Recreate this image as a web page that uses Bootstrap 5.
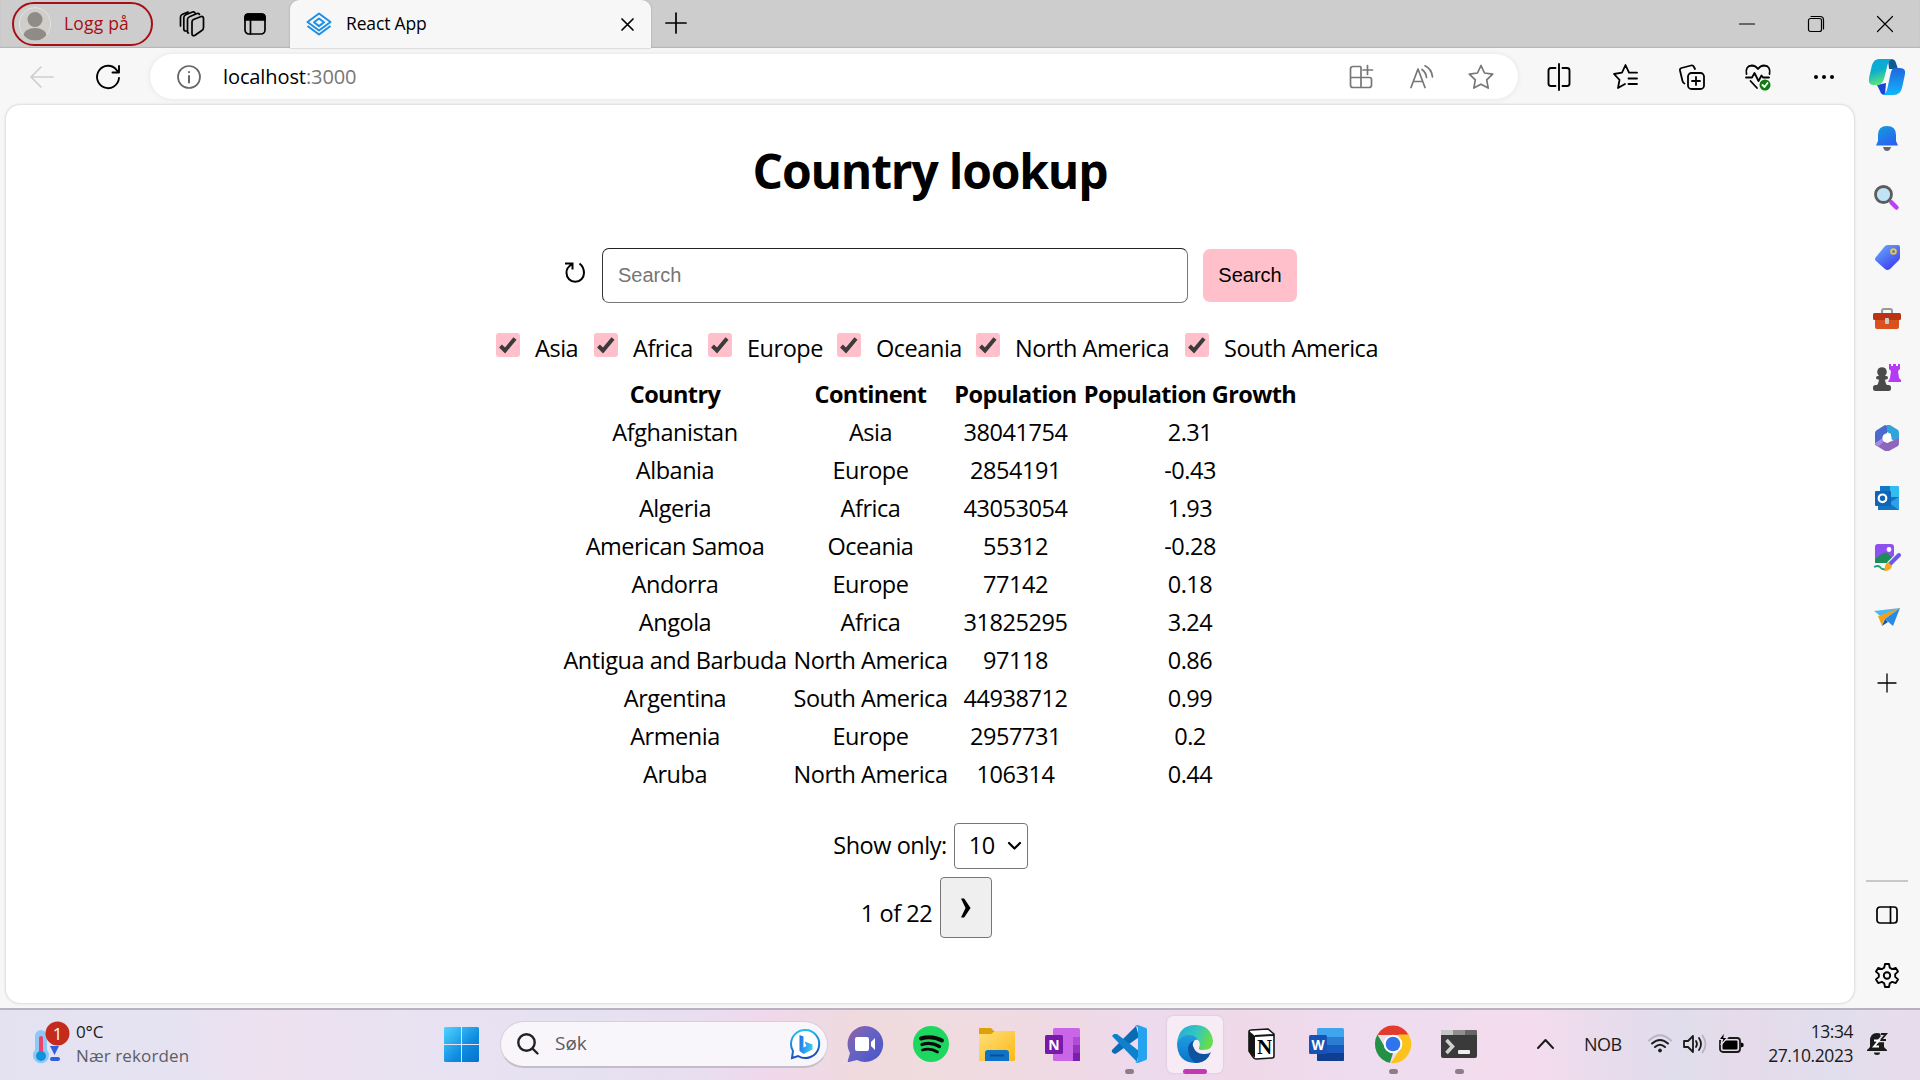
<!DOCTYPE html>
<html lang="no">
<head>
<meta charset="utf-8">
<title>React App</title>
<link href="https://cdn.jsdelivr.net/npm/bootstrap@5.3.0/dist/css/bootstrap.min.css" rel="stylesheet">
<script src="https://cdn.jsdelivr.net/npm/bootstrap@5.3.0/dist/js/bootstrap.bundle.min.js"></script>
<style>
body{width:1920px;height:1080px;overflow:hidden;background:#f7f7f7;color:#000;font-family:"Open Sans","Noto Sans",sans-serif;line-height:1}
svg{display:block;flex:none;overflow:visible}
.ln{fill:none;stroke:currentColor;stroke-width:1.7;stroke-linecap:round;stroke-linejoin:round}
.cell{display:flex;align-items:center;justify-content:center;flex:none}
/* tab strip */
.tabstrip{height:48px;background:#cdcdcd;box-shadow:inset 0 -1px 1px #b5b5b5;padding-left:12px}
.login{width:141px;height:44px;margin-top:2px;border:2px solid #a80f14;border-radius:22px;color:#a80f14;font-size:17.5px;letter-spacing:.2px;padding-left:5px;gap:13px}
.tab{width:361px;height:48px;background:#f7f7f7;border-radius:9px 9px 0 0;font-size:17.5px;letter-spacing:-.15px;padding:0 16px 0 16px;box-shadow:0 0 2px #999}
.w66{width:66px}.w60{width:60px}.w70{width:70px}
.thin{stroke-width:1.2}
/* toolbar */
.toolbar{height:57px}
.omnibox{width:1368px;height:45px;background:#fff;border-radius:23px;box-shadow:0 0 5px #e3e3e3;font-size:20px;letter-spacing:-.1px;padding-left:27px;padding-right:7px}
/* page */
.page{width:1848px;height:898px;margin-left:6px;background:#fff;border-radius:14px;box-shadow:0 0 3px #bdbdbd;font-size:23.5px;letter-spacing:-.46px}
.page h1{font-size:48px;font-weight:700;line-height:60px;margin:36px 0 47px;letter-spacing:-1.2px}
.reload{width:37px;padding-bottom:7px}
.field{width:586px;height:55px;border:1px solid #777;border-top-color:#222;border-left-color:#333;border-radius:7px;padding:0 15px;font:20px "Liberation Sans",sans-serif}
.field::placeholder{color:#757575}
.go{width:94px;height:53px;border:0;border-radius:7px;background:#ffc0cb;margin-left:15px;font:20px "Liberation Sans",sans-serif;padding:0}
.filters{margin-top:27px;padding-left:490px;height:36px}
.filters label{display:flex;flex:none}
.tick{width:24px;height:24px;background:#ffc0cb;border-radius:3px;margin:3px 15px 0 0}
.filters span{line-height:36px;white-space:nowrap}
.lands{width:740px;margin:9px auto 0;table-layout:fixed;border-collapse:collapse;text-align:center}
.lands th,.lands td{height:38px;padding:0;line-height:34px;white-space:nowrap;vertical-align:middle}
.lands th{letter-spacing:-.6px}
.pick{width:74px;height:46px;border:1px solid #767676;border-radius:4px;padding:0 6px 0 14px}
.next{width:52px;height:61px;border:1px solid #767676;border-radius:4px;background:#efefef;padding:0}
/* side bar */
.side{width:66px}
.side .cell{height:60px}
/* task bar */
.taskbar{height:72px;padding-bottom:2px;border-top:2px solid #b7b2be;color:#1b1b1b;background:linear-gradient(90deg,#e4e2f1 0,#e6e2f1 190px,#eee1f0 270px,#e8e2f1 400px,#e6e1f1 600px,#e8def0 700px,#f0d8eb 770px,#efdade 860px,#efdcdf 930px,#efd9e5 1080px,#ecdaee 1150px,#efd9e8 1240px,#eedcf0 1370px,#f4dcee 1530px,#e5dcec 1630px,#e0deec 1680px,#e6dbea 1740px,#e1deed 1830px,#e8dcec 1920px)}
.weather{width:444px;padding-left:32px;font-size:17px;letter-spacing:-.1px}
.tsearch{width:328px;height:47px;border-radius:24px;background:#f9f6fb;border:1px solid #d6cfdd;border-bottom:2px solid #c5bcc9;padding:0 7px 0 16px;font-size:19px;color:#5b5b60}
.app{width:66px;height:70px;position:relative}
.app.on::before{content:"";position:absolute;left:5px;top:7px;width:56px;height:57px;border-radius:6px;background:#f7ebf6;box-shadow:0 0 2px #c9b8c9}
.app svg{position:relative}
.run::after,.on::after{content:"";position:absolute;top:60px;left:28.5px;width:9px;height:5px;border-radius:3px;background:#8b7e8b}
.on::after{left:21px;width:24px;background:#c239b3}
</style>
</head>
<body>
<header class="tabstrip d-flex">
  <div class="login d-flex align-items-center">
    <svg width="32" height="34" viewBox="0 0 32 34"><defs><clipPath id="av"><ellipse cx="16" cy="17" rx="15.5" ry="16.5"/></clipPath></defs><ellipse cx="16" cy="17" rx="15.5" ry="16.5" fill="#d0cecb" stroke="#e5e3e0"/><g fill="#8f8b86" clip-path="url(#av)"><ellipse cx="16" cy="12.500" rx="7.500" ry="7.500"/><ellipse cx="16" cy="29" rx="11.500" ry="8"/></g></svg>
    <span>Logg på</span>
  </div>
  <div class="cell" style="width:78px"><svg class="ln" width="26" height="26" viewBox="0 0 26 26"><path d="M14.500 8.500l7-2.800q3-1 3 2v9q0 2-2 3l-6.500 4.500q-3 1.500-3-1.500V11q0-1.800 1.500-2.500zM8.500 21V8.500q0-2 2-2.800L18 2.500q2-.6 2.500 1M9.500 22q-1 0-1-2M4.800 18.500V6.500q0-2 2-2.800L13.500 1q2-.6 2.500 1M7 20q-2.200 0-2.200-2M1.500 15V6q0-2 2-2.800L9 1"/></svg></div>
  <div class="cell" style="width:48px"><svg class="ln" width="24" height="24" viewBox="0 0 24 24"><rect x="2" y="2" width="20" height="20" rx="4"/><path d="M2 5q0-3 3-3h14q3 0 3 3v3H2z" fill="currentColor"/><path d="M7.500 8v14"/></svg></div>
  <div class="tab d-flex align-items-center" style="margin-left:11px">
    <svg width="26" height="24" viewBox="0 0 26 24" fill="none" stroke="#1e8fe6" stroke-width="2" stroke-linejoin="round"><path d="M13 1.500L24.500 10 13 18.500 1.500 10z"/><path d="M13 6.500l5 3.800-5 3.800-5-3.800zM1.500 14L13 22.500 24.500 14"/></svg>
    <span class="flex-grow-1" style="padding-left:14px">React App</span>
    <svg class="ln" width="15" height="15" viewBox="0 0 15 15"><path d="M2 2l11 11M13 2L2 13"/></svg>
  </div>
  <div class="cell" style="width:50px;height:46px"><svg class="ln" width="22" height="22" viewBox="0 0 22 22"><path d="M11 1v20M1 11h20"/></svg></div>
  <div class="ms-auto d-flex" style="height:47px">
    <div class="cell w70"><svg class="ln thin" width="16" height="16" viewBox="0 0 16 16"><path d="M.5 8h15"/></svg></div>
    <div class="cell" style="width:68px"><svg class="ln thin" width="16" height="16" viewBox="0 0 16 16"><rect x=".5" y="2.500" width="13" height="13" rx="2"/><path d="M3 .5h9q3.500 0 3.500 3.500v9"/></svg></div>
    <div class="cell w70"><svg class="ln thin" width="16" height="16" viewBox="0 0 16 16"><path d="M.5.5l15 15M15.500.5l-15 15"/></svg></div>
  </div>
</header>

<div class="toolbar d-flex align-items-center">
  <div class="cell" style="width:84px"><svg class="ln" width="24" height="22" viewBox="0 0 24 22" style="color:#cfcfcf"><path d="M23 11H1M11 1L1 11l10 10"/></svg></div>
  <div class="cell" style="width:48px;margin-right:18px"><svg class="ln" width="24" height="24" viewBox="0 0 24 24" style="stroke-width:1.9"><path d="M23 13A11 11.200 0 1 1 20.500 4.800L22.500 7M23 1v6.500h-6.500"/></svg></div>
  <div class="omnibox d-flex align-items-center">
    <svg class="ln" width="24" height="24" viewBox="0 0 24 24" style="color:#666"><circle cx="12" cy="12" r="11"/><path d="M12 11v6.500M12 7v.2" stroke-width="2"/></svg>
    <span class="flex-grow-1" style="padding-left:22px">localhost<span style="color:#777">:3000</span></span>
    <div class="d-flex" style="color:#777">
      <div class="cell w60"><svg class="ln" width="24" height="24" viewBox="0 0 24 24"><path d="M11.500 1.500H4Q1.500 1.500 1.500 4v16q0 2.500 2.500 2.500h16q2.500 0 2.500-2.500v-5.500q0-2-2-2h-19M12 2v20.500M18.500.5v9M14 5h9.500"/></svg></div>
      <div class="cell w60"><svg class="ln" width="25" height="24" viewBox="0 0 25 24"><path d="M2 22.500L9 4l7 18.500M4.500 16.500h9M13 4.500q4 3 4.500 8M16 .8q6.500 3 7.500 11"/></svg></div>
      <div class="cell w60"><svg class="ln" width="26" height="26" viewBox="0 0 26 26"><path d="M13 1.500l3.500 7.500 8.200 1.200-6 5.700 1.500 8.200L13 20.200l-7.200 3.900 1.500-8.200-6-5.700L9.500 9z"/></svg></div>
    </div>
  </div>
  <div class="d-flex" style="margin-left:8px">
    <div class="cell w66"><svg class="ln" width="24" height="26" viewBox="0 0 24 26" style="stroke-width:1.9"><path d="M12 0v26M8.500 4H4Q1.500 4 1.500 6.500v13Q1.500 22 4 22h4.500M15.500 4H20q2.500 0 2.500 2.500v13q0 2.500-2.500 2.500h-4.500"/></svg></div>
    <div class="cell" style="width:67px"><svg class="ln" width="25" height="25" viewBox="0 0 25 25" style="stroke-width:1.8"><path d="M12 20l-7 4 1.500-8.200L1 10l8-1.300L12.500 1 16 8.700h8M15.500 14.500H24M15.500 20H24"/></svg></div>
    <div class="cell w66"><svg class="ln" width="26" height="26" viewBox="0 0 26 26" style="stroke-width:1.8"><rect x="9" y="9" width="16" height="16" rx="3.500"/><path d="M17 13v8M13 17h8M5.500 19.500Q4 19 3.500 17L1 6.500Q.6 4.500 2.500 4L12 1.500q2-.5 2.700 1L16 5"/></svg></div>
    <div class="cell w66"><svg class="ln" width="26" height="26" viewBox="0 0 26 26" style="stroke-width:1.8"><path d="M1.500 10Q0 2 7 1.500q3.500 0 6 3.500 2.500-3.500 6-3.500 7 .5 5.500 8.500M1 13.500h6l2.500-4.500 4 8 3-5.500 1.500 2h6M5.500 17l6.500 7"/><circle cx="20" cy="21" r="5.500" fill="#107c10" stroke="none"/><path d="M17.500 21l2 2 3-4" stroke="#fff"/></svg></div>
    <div class="cell w66"><svg width="22" height="6" viewBox="0 0 22 6"><circle cx="3" cy="3" r="2"/><circle cx="11" cy="3" r="2"/><circle cx="19" cy="3" r="2"/></svg></div>
    <div class="cell w60"><svg width="36" height="36" viewBox="0 0 36 36"><defs><linearGradient id="ca" x2=".3" y2="1"><stop offset="0" stop-color="#08a5df"/><stop offset=".5" stop-color="#0bb0cb"/><stop offset="1" stop-color="#5ee27a"/></linearGradient><linearGradient id="cb" x2="0" y2="1"><stop stop-color="#1f67dc"/><stop offset="1" stop-color="#12b5ff"/></linearGradient></defs><path d="M19 0h3q4 0 5 4l2 6h-9z" fill="#0e5a91"/><path d="M8 26l9-2-1 12q-4 0-5-4z" fill="#1a45d6"/><path d="M10 0h14q-4.500.5-6 8l-3 12q-2 6-7 6H4Q-1 26 0 19L3 6Q5 0 10 0z" fill="url(#ca)"/><path d="M26 9h5q6 0 5 6l-3 14q-2 7-8 7H13q4 0 5.500-7l3-14q1-6 4.500-6z" fill="url(#cb)"/></svg></div>
  </div>
</div>

<div class="d-flex" style="height:903px">
  <main class="page">
    <h1 class="text-center">Country lookup</h1>
    <div class="d-flex align-items-center justify-content-center" style="padding-left:2px">
      <div class="reload"><svg width="21" height="21" viewBox="0 0 21 21" fill="none" stroke="#000" stroke-width="2"><path d="M0 1.500h7.500v6M7 2Q1 6 1.500 11a8.700 8.700 0 0 0 17.500 0Q19 5 14.500 1.500"/></svg></div>
      <input class="field" placeholder="Search"><button class="go">Search</button>
    </div>
    <div class="filters d-flex" id="filters"></div>
    <table class="lands"><colgroup><col style="width:230px"><col style="width:161px"><col style="width:129px"><col style="width:220px"></colgroup>
      <thead><tr><th>Country</th><th>Continent</th><th>Population</th><th>Population Growth</th></tr></thead>
      <tbody id="rows"></tbody></table>
    <div class="d-flex justify-content-center align-items-center" style="margin-top:30px;padding-left:1px"><span style="margin-right:7px">Show only:</span><div class="pick d-flex align-items-center justify-content-between"><span>10</span><svg class="ln" width="13" height="8" viewBox="0 0 13 8" style="stroke-width:2.2"><path d="M1 1l5.500 5.500L12 1"/></svg></div></div>
    <div class="d-flex justify-content-center" style="margin-top:8px;padding-right:7px"><span style="padding-top:25px;margin-right:8px">1 of 22</span><button class="next cell"><svg width="10" height="20" viewBox="0 0 11 21"><path d="M0 0h3.500L10.500 10.500 3.500 21H0L5 10.500z"/></svg></button></div>
  </main>
  <aside class="side d-flex flex-column align-items-center">
    <div class="cell" style="height:66px"><svg width="22" height="25" viewBox="0 0 22 25"><defs><linearGradient id="be" x2=".6" y2="1"><stop stop-color="#10a0dc"/><stop offset="1" stop-color="#2b62f0"/></linearGradient></defs><path d="M7 21h8q-1 4-4 4t-4-4z" fill="#666"/><path d="M11 0q9 0 9 9v6l2 4.500H0L2 15V9q0-9 9-9z" fill="url(#be)"/></svg></div>
    <div class="cell" style="height:52px;padding-right:2px"><svg width="25" height="25" viewBox="0 0 25 25"><path d="M17.500 17.500l5 5" stroke="#c23cf5" stroke-width="4.500" stroke-linecap="round"/><circle cx="9.500" cy="9.500" r="8" fill="#bfe4f8" stroke="#5c5c5c" stroke-width="2.800"/></svg></div>
    <div class="cell" style="height:69px"><svg width="25" height="25" viewBox="0 0 25 25"><defs><linearGradient id="tg" x2=".7" y2="1"><stop stop-color="#69b4ff"/><stop offset="1" stop-color="#3e3cf0"/></linearGradient></defs><path d="M13 0h10q2 0 2 2v10q0 2-1 3l-9 9q-3 2-5 0l-9-8q-2-2 0-4L10 1q1-1 3-1z" fill="url(#tg)"/><circle cx="18.500" cy="6.500" r="2.400" fill="none" stroke="#ffc81e" stroke-width="1.800"/></svg></div>
    <div class="cell" style="height:54px"><svg width="28" height="22" viewBox="0 0 28 22"><path d="M9 6V3q0-2 2-2h6q2 0 2 2v3" fill="none" stroke="#999" stroke-width="2"/><path d="M2 10h24v9q0 2-2 2H4q-2 0-2-2z" fill="#d9511c"/><rect y="5" width="28" height="7" rx="1.500" fill="#b83412"/><rect x="12" y="10" width="4" height="6" rx="1" fill="#ccc"/></svg></div>
    <div class="cell" style="height:63px"><svg width="28" height="27" viewBox="0 0 28 27"><path d="M16 0h2v2h2V0h3v2h2V0h2v5l-2 2 1 7 2 2v2H15l2-4 1-7-2-2z" fill="#b639f5"/><g fill="#4a4a4a"><circle cx="9" cy="8" r="4.800"/><rect x="3" y="12" width="12" height="3.500" rx="1.700"/><path d="M6 14h6q0 6 3 8H3q3-2 3-8z"/><rect y="21" width="18" height="6" rx="2.500"/></g></svg></div>
    <div class="cell" style="height:57px"><svg width="24" height="26" viewBox="0 0 24 26"><path d="M12 0h3l8 5q1 1 1 3v10l-8-4V9l-8-4z" fill="#2fa4dd"/><path d="M0 18l9-2 3 2 12-5v5q0 2-1 3l-9 5h-4l-8-5q-2-1-2-3z" fill="#8e67bd"/><path d="M0 18V8q0-2 2-3l8-5q2 0 2 2v6l-4 3v6l-5 4q-3 0-3-3z" fill="#4a6bcd"/><path d="M0 18l8-5v4l-4 4q-4 0-4-3z" fill="#aa8be2"/><circle cx="12" cy="13" r="4.600" fill="#fff"/></svg></div>
    <div class="cell" style="height:64px"><svg width="24" height="24" viewBox="0 0 24 24"><rect x="6" width="18" height="12" rx="1" fill="#32bdf2"/><path d="M5 0h10v6H5z" fill="#1278c8"/><path d="M3 11h21v13H3z" fill="#1474c4"/><path d="M24 11v13L14 17z" fill="#2fa0e8"/><rect y="5" width="16" height="15" rx="1" fill="#0f65b8"/><circle cx="7.500" cy="12.300" r="3.800" fill="none" stroke="#fff" stroke-width="2.200"/></svg></div>
    <div class="cell" style="height:54px"><svg width="28" height="27" viewBox="0 0 28 27"><rect x="2" width="19" height="19" rx="3" fill="#8e50ee"/><circle cx="16" cy="5.500" r="2.400" fill="#fff"/><path d="M2 15l8-6q2-1 4 0l7 6v2q0 2-2 2H2z" fill="#1c8c5a"/><path d="M1 23q4-2 6 0 2 3 5 2" fill="none" stroke="#22a27a" stroke-width="1.800"/><path d="M17 20l9-9" stroke="#f7f7f7" stroke-width="6.500" stroke-linecap="round"/><path d="M17 20l9-9" stroke="#6a57ee" stroke-width="4" stroke-linecap="round"/><path d="M15 18l4 4q-1 5-8 5 1-2 1-5 1-3 3-4z" fill="#f5a91e"/></svg></div>
    <div class="cell" style="height:66px"><svg width="26" height="19" viewBox="0 0 26 19"><path d="M0 3L26 0 9 10z" fill="#49b9f5"/><path d="M4 8L26 0 10 12 8 18z" fill="#f2a11d"/><path d="M26 0L11 11l8 7z" fill="#258be8"/><path d="M8 18l3-7 3 3z" fill="#1256a8"/></svg></div>
    <div class="cell" style="height:66px;padding-right:1px"><svg class="ln" width="18" height="18" viewBox="0 0 18 18" style="stroke-width:1.3"><path d="M9 0v18M0 9h18"/></svg></div>
    <div style="height:2px;width:42px;background:#c8c8c8;margin:164px 0 3px"></div>
    <div class="cell"><svg class="ln" width="22" height="18" viewBox="0 0 22 18"><rect x="1" y="1" width="20" height="16" rx="3"/><path d="M14.500 1v16"/></svg></div>
    <div class="cell"><svg class="ln" width="24" height="25" viewBox="0 0 24 25" style="stroke-width:1.9"><path d="M10 1h4l.8 3.700 2.400 1.400 3.600-1.200 2.200 3.700-2.800 2.500v2.800l2.800 2.500-2.200 3.700-3.600-1.200-2.400 1.400L14 24h-4l-.8-3.700-2.400-1.400-3.600 1.200L1 16.400l2.800-2.500v-2.800L1 8.600l2.200-3.700 3.600 1.200 2.400-1.400z"/><circle cx="12" cy="12.500" r="3.200"/></svg></div>
  </aside>
</div>

<footer class="taskbar d-flex align-items-center">
  <div class="weather d-flex align-items-center">
    <div class="position-relative" style="width:44px;height:44px"><svg width="38" height="44" viewBox="0 0 38 44"><path d="M3 14a6 6 0 0 1 12 0v14a8 8 0 1 1-12 0z" fill="#8cc9f7"/><path d="M9 16v17" stroke="#f0436a" stroke-width="4" stroke-linecap="round"/><circle cx="9" cy="34" r="5" fill="#1292dd"/><path d="M18 24h9l-4.500 9z" fill="#2f5fe0"/><path d="M20 37h6" stroke="#2f5fe0" stroke-width="4" stroke-linecap="round"/><circle cx="25.500" cy="11.500" r="12" fill="#c42b1c"/><text x="25.500" y="17.500" text-anchor="middle" fill="#fff" font-size="17">1</text></svg></div>
    <div style="padding-bottom:2px"><div>0°C</div><div style="margin-top:7px;color:#5e5c66;letter-spacing:.12px">Nær rekorden</div></div>
  </div>
  <div class="cell" style="width:35px"><svg width="35" height="35" viewBox="0 0 35 35"><defs><linearGradient id="wi" gradientUnits="userSpaceOnUse" x1="0" y1="0" x2="35" y2="35"><stop stop-color="#4fd4ff"/><stop offset=".6" stop-color="#0f8be0"/><stop offset="1" stop-color="#0672cd"/></linearGradient></defs><path d="M1 0h16v17H0V1zM18 0h16l1 1v16H18zM0 18h17v17H1l-1-1zM18 18h17v16l-1 1H18z" fill="url(#wi)"/></svg></div>
  <div class="tsearch d-flex align-items-center" style="margin-left:21px">
    <svg class="ln" width="22" height="22" viewBox="0 0 22 22" style="stroke-width:2.400;color:#222"><circle cx="9.500" cy="9.500" r="8.200"/><path d="M15.500 15.500l5 5"/></svg>
    <span class="flex-grow-1" style="padding-left:16px">Søk</span>
    <svg width="30" height="30" viewBox="0 0 30 30"><defs><linearGradient id="bi" x2=".2" y2="1"><stop stop-color="#22c7f5"/><stop offset="1" stop-color="#1a4fc0"/></linearGradient><linearGradient id="bj" x2="1" y2=".3"><stop stop-color="#1f6fe8"/><stop offset="1" stop-color="#35c4f2"/></linearGradient></defs><path d="M15 1a14 14 0 1 1-7 26l-6 2 1-7Q1 19 1 15A14 14 0 0 1 15 1z" fill="#fff" stroke="url(#bi)" stroke-width="2"/><path d="M9.500 6l4 1.500v11l3-1.500-2-4.500 8 3v5L13.500 25l-4-3z" fill="url(#bj)"/></svg>
  </div>
  <div class="d-flex" style="margin-left:4px">
    <div class="app cell"><svg width="36" height="36" viewBox="0 0 36 36"><defs><linearGradient id="ch" x1="0" y1="0" x2=".9" y2=".8"><stop stop-color="#9560a0"/><stop offset=".5" stop-color="#6763c4"/><stop offset="1" stop-color="#5057c8"/></linearGradient></defs><path d="M18 0a18 18 0 1 1-8 34l-8 2q-2 0-1-2l2-7A18 18 0 0 1 18 0z" fill="url(#ch)"/><rect x="8" y="11" width="14" height="14" rx="2" fill="#fff"/><path d="M24 16l4-4v12l-4-4z" fill="#fff"/></svg></div>
    <div class="app cell"><svg width="36" height="36" viewBox="0 0 36 36"><circle cx="18" cy="18" r="18" fill="#1ed760"/><g fill="none" stroke="#0b0b0b" stroke-linecap="round"><path d="M8 12.500q11-3.500 21 2" stroke-width="4"/><path d="M9 18.500q9-3 17.500 2" stroke-width="3.300"/><path d="M9.500 24q8-2.500 15 2" stroke-width="2.700"/></g></svg></div>
    <div class="app cell"><svg width="36" height="36" viewBox="0 0 36 36"><defs><linearGradient id="fo" x2="1" y2="1"><stop stop-color="#ffdf7a"/><stop offset="1" stop-color="#fbb918"/></linearGradient></defs><path d="M0 3q0-1 1-1h11l3 3h20q1 0 1 1v8H0z" fill="#dda20b"/><path d="M0 8h12l4-3h19q1 0 1 1v28q0 1-1 1H1q-1 0-1-1z" fill="url(#fo)"/><path d="M6 35v-8q0-3 3-3h18q3 0 3 3v8z" fill="#0e72c6"/><path d="M11 29.500h14" stroke="#0a4f96" stroke-width="2"/></svg></div>
    <div class="app cell"><svg width="36" height="34" viewBox="0 0 36 34"><rect x="8" y="1" width="27" height="33" rx="1.500" fill="#c966e8"/><path d="M28 10h7v8h-7z" fill="#b04bd6"/><path d="M28 18h7v8h-7z" fill="#9335bd"/><path d="M28 26h7v8h-7z" fill="#7c1fb0"/><rect y="8" width="18" height="19" rx="1.500" fill="#7719aa"/><text x="9" y="22.500" text-anchor="middle" fill="#fff" font-size="14" font-weight="700">N</text></svg></div>
    <div class="app run cell"><svg width="36" height="38" viewBox="0 0 36 38"><path d="M25 1L1 25q-1 2 1 3l2 1 2-1L28 12z" fill="#0a6ab2"/><path d="M1 11l2-2h3l22 17-2 11Z" fill="#0f80cc"/><path d="M27 0l8 3q1 0 1 2v28q0 2-1 2l-8 3q-2 0-3-1 3 0 3-3V4q0-3-3-3 1-1 3-1z" fill="#25a3f0"/></svg></div>
    <div class="app on cell"><svg width="36" height="38" viewBox="0 0 36 38"><defs><linearGradient id="e1" x2="1" y2=".3"><stop stop-color="#25a8dc"/><stop offset=".6" stop-color="#35c8bd"/><stop offset="1" stop-color="#65dd4c"/></linearGradient><linearGradient id="e2" x2="0" y2="1"><stop stop-color="#209edf"/><stop offset="1" stop-color="#0873ca"/></linearGradient></defs><path d="M0 18Q2 0 18 0t18 16q0 9-10 9-5 0-4-2 3-7-5-11Q8 8 0 18z" fill="url(#e1)"/><path d="M0 18q4-8 12-8 6 0 9 5-5-1-6 4-3 14 15 14-5 5-12 5Q0 37 0 18z" fill="url(#e2)"/><path d="M11 23q1-6 7-8-3 3-2 6 3 9 12 8 4 0 6-2-4 11-15 11-8-4-8-15z" fill="#0e539f"/></svg></div>
    <div class="app cell"><svg width="27" height="31" viewBox="0 0 27 31"><path d="M1 3Q1 1 3 1L20 0l6 5v22q0 2-2 2L8 30q-2 0-3-2l-4-6z" fill="#fff" stroke="#151515" stroke-width="1.600"/><path d="M1 2l6 5v22l-6-6z" fill="#151515"/><path d="M7 7l19-1" stroke="#151515" stroke-width="2"/><text x="16.500" y="25" text-anchor="middle" font-family="Liberation Serif,serif" font-weight="700" font-size="21">N</text></svg></div>
    <div class="app cell"><svg width="36" height="34" viewBox="0 0 36 34"><rect x="8" y="1" width="27" height="33" rx="1.500" fill="#41a5ee"/><path d="M8 10h27v8H8z" fill="#2b7cd3"/><path d="M8 18h27v8H8z" fill="#185abd"/><path d="M8 26h27v7q0 1-1 1H9q-1 0-1-1z" fill="#103f91"/><rect y="8" width="18" height="19" rx="1.500" fill="#1653b5"/><text x="9" y="22.500" text-anchor="middle" fill="#fff" font-size="13.500" font-weight="700">W</text></svg></div>
    <div class="app run cell"><svg width="36" height="38" viewBox="0 0 36 38"><path d="M2.400 10A18 19 0 0 1 33.600 10H18z" fill="#e33b2e"/><path d="M2.400 9.500L11 24l7 4-3 9.800A18 19 0 0 1 2.400 9.500z" fill="#249045"/><path d="M33.600 9.500A18 19 0 0 1 16 38l9.500-15-2-13.500z" fill="#fcc31e"/><circle cx="18" cy="19" r="9.300" fill="#fff"/><circle cx="18" cy="19" r="7.300" fill="#2f74ea"/></svg></div>
    <div class="app run cell"><svg width="36" height="28" viewBox="0 0 36 28"><rect width="36" height="28" rx="2" fill="#3a3a3a"/><path d="M1 0h11v5H0V1z" fill="#c5c5c5"/><path d="M12 0h12v5H12z" fill="#8f8f8f"/><path d="M24 0h11l1 1v4H24z" fill="#666"/><path d="M5.500 10l6 6.500-6 6.500" fill="none" stroke="#d0d0d0" stroke-width="3.500"/><rect x="17" y="20" width="12" height="4" rx="1" fill="#eee"/></svg></div>
  </div>
  <div class="d-flex align-items-center" style="font-size:18px;padding-left:45px">
    <svg class="ln" width="17" height="10" viewBox="0 0 17 10" style="stroke-width:2"><path d="M1 9l7.500-8L16 9"/></svg>
    <span style="margin-left:30px;width:39px;letter-spacing:-.5px">NOB</span>
    <svg class="ln" width="24" height="20" viewBox="0 0 24 20" style="margin-left:25px;stroke-width:2"><path d="M1 6.500Q12-4 23 6.500" stroke="#b9b4c1"/><path d="M4 9.500q8-7 16 0M7 13q5-4.500 10 0"/><circle cx="12" cy="16.500" r="1.500" fill="currentColor" stroke-width="1"/></svg>
    <svg class="ln" width="24" height="20" viewBox="0 0 24 20" style="margin-left:11px;stroke-width:1.800"><path d="M1 7h4l5-5v16l-5-5H1zM13 7q2 3 0 6M16 4q4 6 0 12"/><path d="M19.500 1.500q6 8.500 0 17" stroke="#b9b4c1"/></svg>
    <svg width="24" height="20" viewBox="0 0 24 20" style="margin-left:12px"><rect x="1" y="4" width="20" height="14" rx="3" fill="none" stroke="#1b1b1b" stroke-width="1.800"/><rect x="3.500" y="6.500" width="15" height="9" rx="1"/><path d="M22 8.500l2.500 1v3l-2.500 1z"/><path d="M5.500-2L0 5.500h3.500L2 11l6.500-7.500H5z" stroke="#e3dcea" stroke-width="1.200"/></svg>
  </div>
  <div class="text-end" style="width:110px;font-size:17.500px;letter-spacing:-.45px;padding-bottom:1px"><div>13:34</div><div style="margin-top:7px">27.10.2023</div></div>
  <svg width="22" height="24" viewBox="0 0 22 24" style="margin-left:14px" fill="#1b1b1b"><path d="M10 1q7 0 7 8v6l3 3v1H0v-1l3-3V9q0-8 7-8zM7 20.500h6q0 2.500-3 2.500t-3-2.500z"/><path d="M13.500 2h5.500l-5.500 6h5.500" fill="none" stroke="#e6dcea" stroke-width="4.500"/><g fill="none" stroke-width="1.900"><path d="M14 2h5l-5 6h5" stroke="#1b1b1b"/><path d="M7 8.500h5l-5 6h5" stroke="#fff"/></g></svg>
</footer>
<script>
const filters=[["Asia",98],["Africa",114],["Europe",129],["Oceania",139],["North America",209],["South America",193]];
document.getElementById("filters").innerHTML=filters.map(f=>`<label style="width:${f[1]}px"><i class="tick cell"><svg width="18" height="17" viewBox="0 0 18 17"><path d="M1.500 9l4.500 4.500L16 1.500" fill="none" stroke="#3b3b3b" stroke-width="4"/></svg></i><span>${f[0]}</span></label>`).join("");
const rows=[["Afghanistan","Asia",38041754,2.31],["Albania","Europe",2854191,-0.43],["Algeria","Africa",43053054,1.93],["American Samoa","Oceania",55312,-0.28],["Andorra","Europe",77142,0.18],["Angola","Africa",31825295,3.24],["Antigua and Barbuda","North America",97118,0.86],["Argentina","South America",44938712,0.99],["Armenia","Europe",2957731,0.2],["Aruba","North America",106314,0.44]];
document.getElementById("rows").innerHTML=rows.map(r=>"<tr>"+r.map(c=>`<td>${c}</td>`).join("")+"</tr>").join("");
</script>
</body>
</html>
